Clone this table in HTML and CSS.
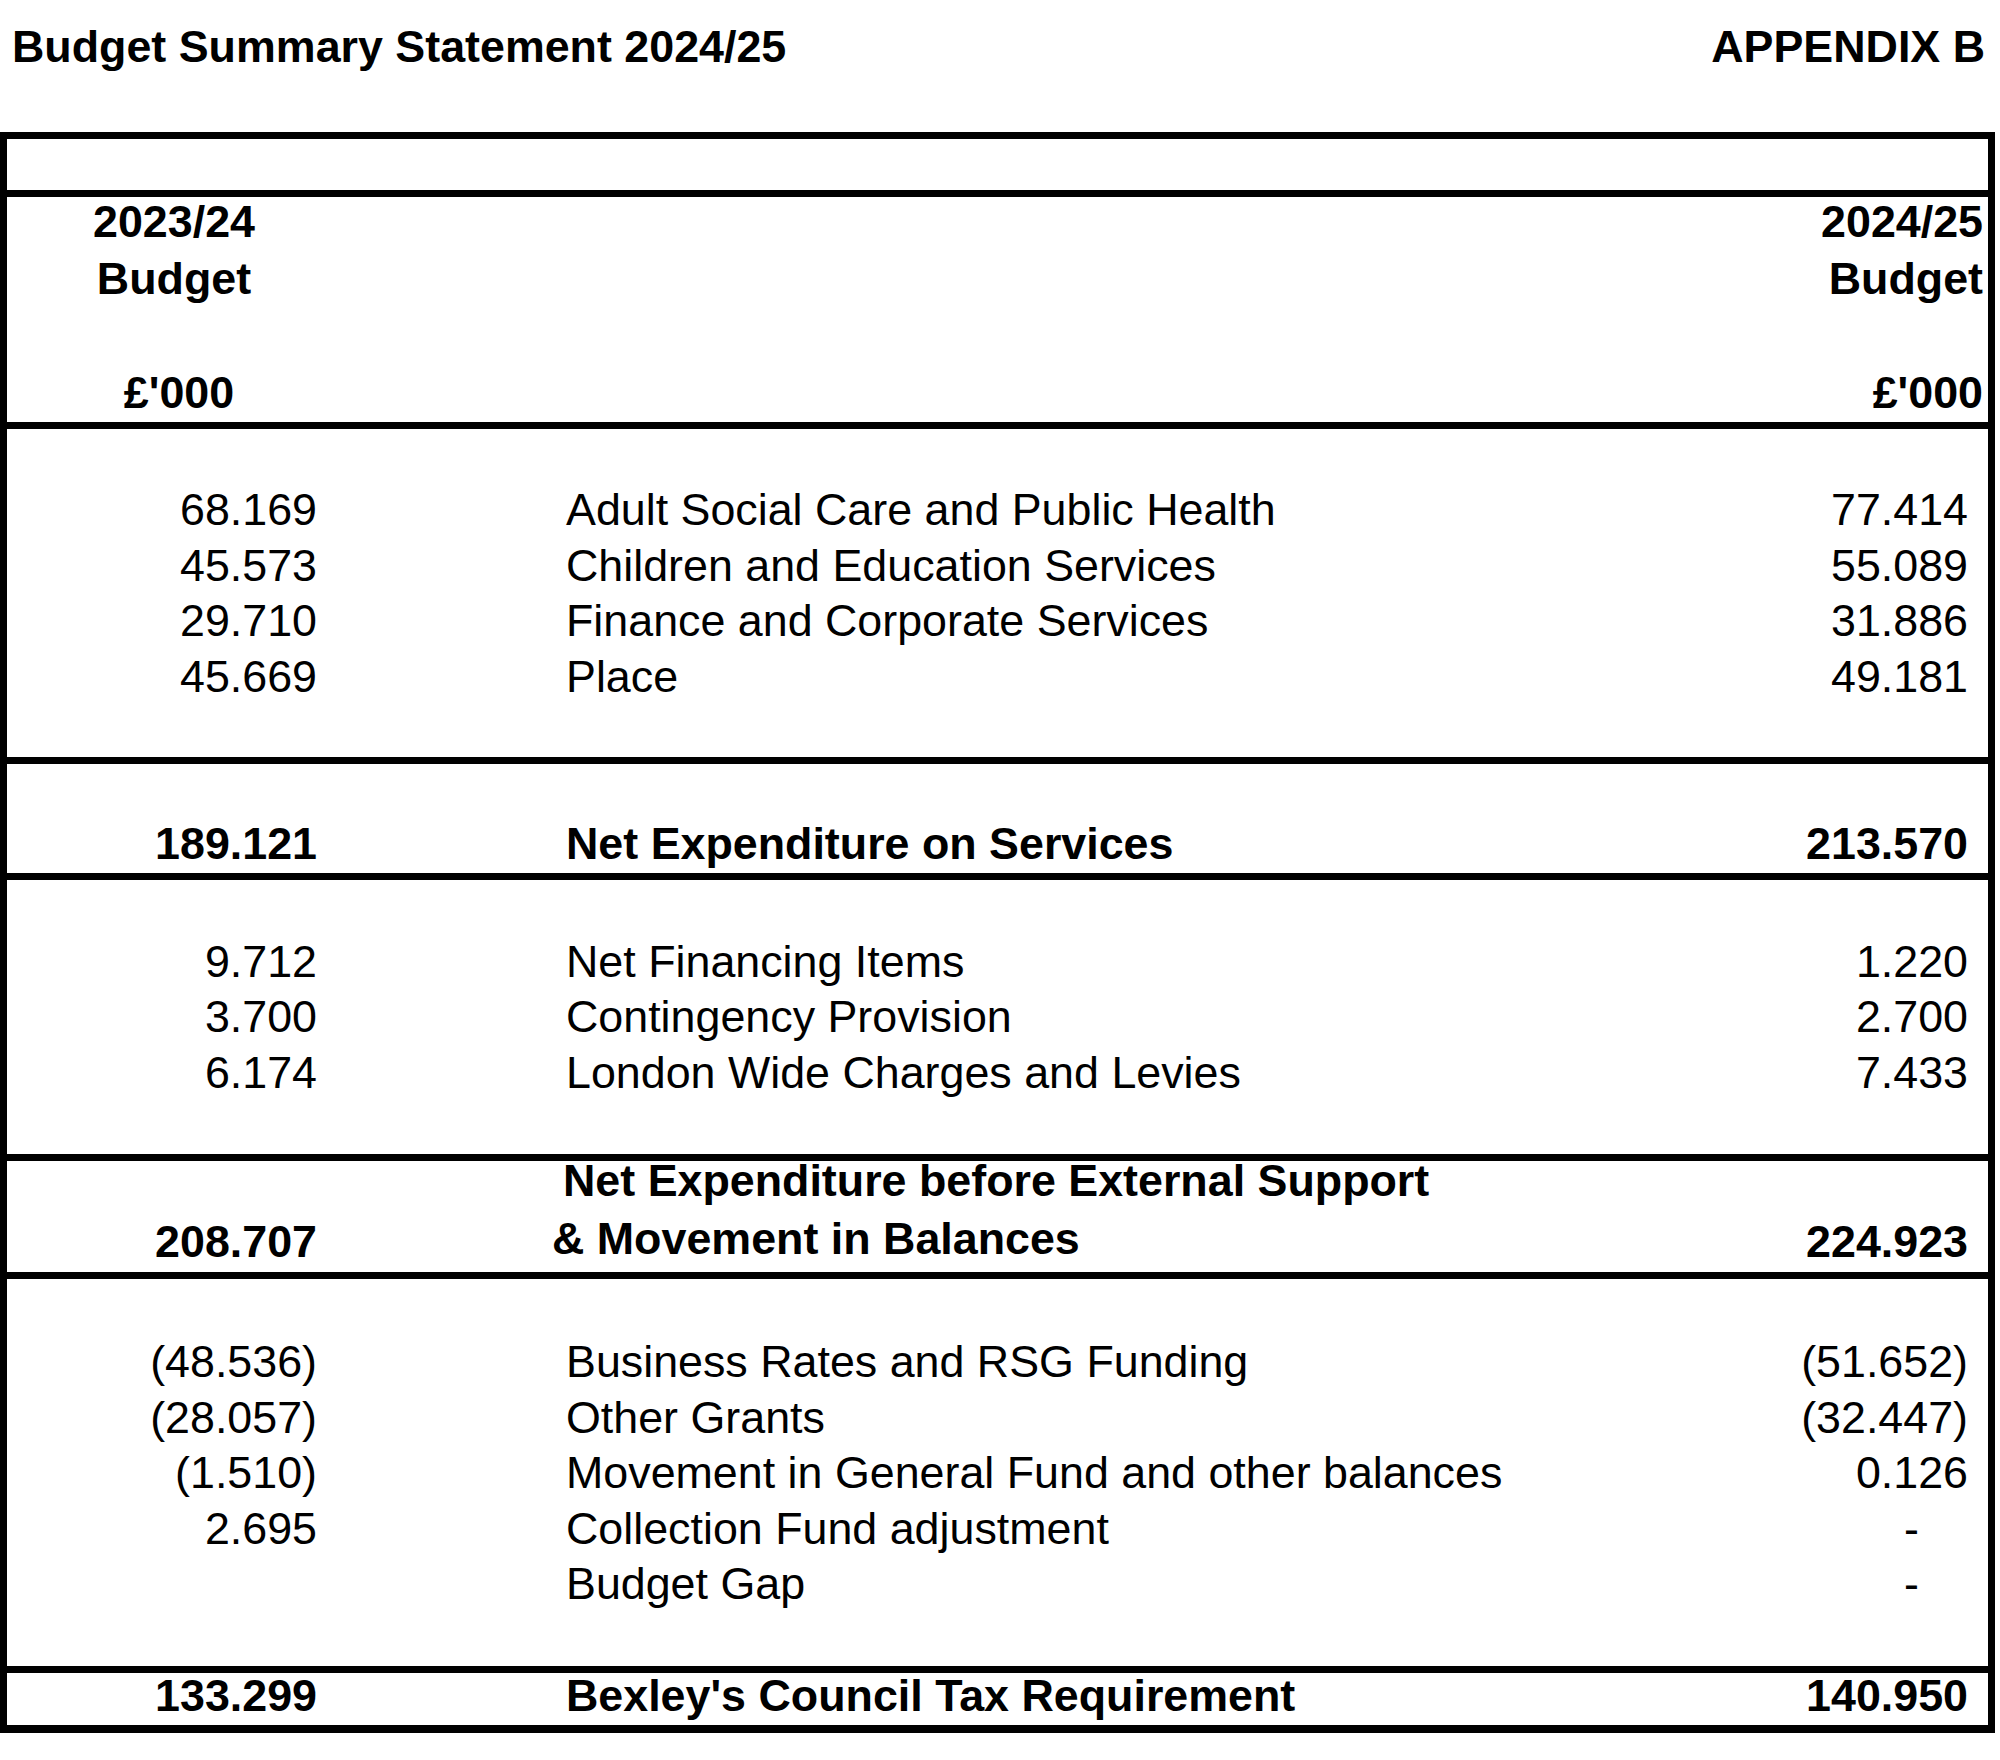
FILE: index.html
```html
<!DOCTYPE html>
<html lang="en">
<head>
<meta charset="utf-8">
<title>Budget Summary Statement 2024/25</title>
<link rel="stylesheet" href="styles.css">
</head>
<body>
<div class="page">
  <header class="top">
    <h1 class="title">Budget Summary Statement 2024/25</h1>
    <div class="appx">APPENDIX B</div>
  </header>

  <div class="sheet">
    <div class="sec sec-blank"></div>

    <div class="sec sec-head">
      <div class="hcol hcol-left">
        <div>2023/24</div>
        <div>Budget</div>
        <div>&nbsp;</div>
        <div class="unit-left">£'000</div>
      </div>
      <div class="hcol hcol-mid"></div>
      <div class="hcol hcol-right">
        <div>2024/25</div>
        <div>Budget</div>
        <div>&nbsp;</div>
        <div>£'000</div>
      </div>
    </div>

    <div class="sec sec-a">
      <div class="row"><span class="num">68.169</span><span class="lbl">Adult Social Care and Public Health</span><span class="num">77.414</span></div>
      <div class="row"><span class="num">45.573</span><span class="lbl">Children and Education Services</span><span class="num">55.089</span></div>
      <div class="row"><span class="num">29.710</span><span class="lbl">Finance and Corporate Services</span><span class="num">31.886</span></div>
      <div class="row"><span class="num">45.669</span><span class="lbl">Place</span><span class="num">49.181</span></div>
    </div>

    <div class="sec sec-b">
      <div class="row bold"><span class="num">189.121</span><span class="lbl">Net Expenditure on Services</span><span class="num">213.570</span></div>
    </div>

    <div class="sec sec-c">
      <div class="row"><span class="num">9.712</span><span class="lbl">Net Financing Items</span><span class="num">1.220</span></div>
      <div class="row"><span class="num">3.700</span><span class="lbl">Contingency Provision</span><span class="num">2.700</span></div>
      <div class="row"><span class="num">6.174</span><span class="lbl">London Wide Charges and Levies</span><span class="num">7.433</span></div>
    </div>

    <div class="sec sec-d">
      <div class="row bold">
        <span class="num num-low">208.707</span>
        <span class="lbl lbl-two">
          <span class="l1">Net Expenditure before External Support</span>
          <span class="l2">&amp; Movement in Balances</span>
        </span>
        <span class="num num-low">224.923</span>
      </div>
    </div>

    <div class="sec sec-e">
      <div class="row"><span class="num">(48.536)</span><span class="lbl">Business Rates and RSG Funding</span><span class="num">(51.652)</span></div>
      <div class="row"><span class="num">(28.057)</span><span class="lbl">Other Grants</span><span class="num">(32.447)</span></div>
      <div class="row"><span class="num">(1.510)</span><span class="lbl">Movement in General Fund and other balances</span><span class="num">0.126</span></div>
      <div class="row"><span class="num">2.695</span><span class="lbl">Collection Fund adjustment</span><span class="num dash">-</span></div>
      <div class="row"><span class="num"></span><span class="lbl">Budget Gap</span><span class="num dash">-</span></div>
    </div>

    <div class="sec sec-f">
      <div class="row bold"><span class="num">133.299</span><span class="lbl">Bexley's Council Tax Requirement</span><span class="num">140.950</span></div>
    </div>
  </div>
</div>
</body>
</html>
```

FILE: styles.css
```css
html, body {
  margin: 0;
  padding: 0;
  background: #ffffff;
}

body {
  font-family: "Liberation Sans", Arial, Helvetica, sans-serif;
  font-size: 44.8px;
  color: #000000;
}

.page {
  width: 1995px;
}

/* ---------- title row ---------- */
.top {
  height: 132px;
  box-sizing: border-box;
  padding: 21px 10px 0 12px;
  display: flex;
  justify-content: space-between;
  align-items: flex-start;
}

.title,
.appx {
  margin: 0;
  font-size: 44.8px;
  font-weight: bold;
  line-height: 50px;
}

/* ---------- sheet ---------- */
.sheet {
  border-top: 7px solid #000;
  border-left: 7px solid #000;
  border-right: 7px solid #000;
}

.sec {
  box-sizing: border-box;
  border-bottom: 7px solid #000;
}

.sec-blank { height: 58px; }

/* header */
.sec-head {
  height: 232px;
  display: grid;
  grid-template-columns: 334px 1fr 400px;
  font-weight: bold;
  line-height: 57px;
}

.hcol { margin-top: -4px; }
.hcol-left { text-align: center; }
.unit-left { padding-left: 10px; }
.hcol-right { text-align: right; padding-right: 5px; }

/* data rows */
.row {
  display: grid;
  grid-template-columns: 310px 1fr 360px;
  line-height: 55.5px;
}

.row .num {
  text-align: right;
  white-space: nowrap;
}

.row .num:last-child {
  padding-right: 20px;
}

.row .num.dash {
  padding-right: 69px;
}

.row .lbl {
  padding-left: 249px;
  white-space: nowrap;
}

.bold { font-weight: bold; }

.sec-a { height: 335px; padding-top: 53px; }
.sec-b { height: 116px; padding-top: 52px; }
.sec-c { height: 281px; padding-top: 53.5px; }

.sec-d { height: 118px; }
.sec-d .num-low { padding-top: 53px; }
.lbl-two {
  display: flex;
  flex-direction: column;
  align-items: flex-start;
  line-height: 58px;
  margin-top: -10px;
}
.lbl-two .l1 { margin-left: -3px; }
.lbl-two .l2 { margin-left: -14px; }

.sec-e { height: 394px; padding-top: 55px; }

.sec-f {
  height: 60px;
  border-bottom-width: 8px;
}
.sec-f .row { line-height: 44px; }
```
